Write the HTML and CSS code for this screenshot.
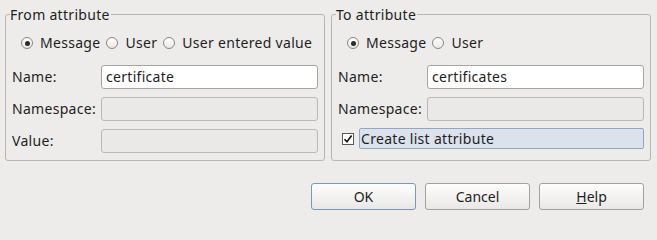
FILE: index.html
```html
<!DOCTYPE html>
<html>
<head>
<meta charset="utf-8">
<link rel="stylesheet" href="styles.css">
</head>
<body>
<div class="dialog">
  <div class="groups">
    <div class="group">
      <span class="group-title">From attribute</span>
      <div class="radios">
        <label class="radio"><span class="rb checked"></span>Message</label>
        <label class="radio"><span class="rb"></span>User</label>
        <label class="radio"><span class="rb"></span>User entered value</label>
      </div>
      <div class="form">
        <span class="lbl">Name:</span><div class="input">certificate</div>
        <span class="lbl">Namespace:</span><div class="input disabled"></div>
        <span class="lbl">Value:</span><div class="input disabled"></div>
      </div>
    </div>
    <div class="group">
      <span class="group-title">To attribute</span>
      <div class="radios">
        <label class="radio"><span class="rb checked"></span>Message</label>
        <label class="radio"><span class="rb"></span>User</label>
      </div>
      <div class="form">
        <span class="lbl">Name:</span><div class="input">certificates</div>
        <span class="lbl">Namespace:</span><div class="input disabled"></div>
      </div>
      <div class="check-row">
        <span class="cb"><svg width="10" height="10" viewBox="0 0 10 10"><path d="M1.5 5.2 L4 7.8 L8.6 1.6" fill="none" stroke="#111" stroke-width="1.6"/></svg></span>
        <span class="check-label">Create list attribute</span>
      </div>
    </div>
  </div>
  <div class="buttons">
    <button class="btn default">OK</button>
    <button class="btn">Cancel</button>
    <button class="btn"><u>H</u>elp</button>
  </div>
</div>
</body>
</html>
```
FILE: styles.css
```css
html, body {
  margin: 0;
  padding: 0;
  background: #edecea;
}
body {
  font-family: "Noto Sans", "DejaVu Sans", sans-serif;
  font-size: 14px;
  letter-spacing: 0.3px;
  color: #1e1e1e;
  width: 657px;
  height: 226px;
  overflow: hidden;
}
.dialog {
  padding: 14px 0 0 5px;
}
.groups {
  display: flex;
  gap: 6px;
}
.group {
  position: relative;
  box-sizing: border-box;
  width: 320px;
  height: 147px;
  border: 1px solid #b9b4af;
  border-radius: 3px;
  padding: 18px 6px 0 6px;
}
.group-title {
  position: absolute;
  top: -10px;
  left: 4px;
  line-height: 19px;
  padding: 0 1px 0 0;
  background: #edecea;
}
.radios {
  display: flex;
  height: 20px;
  align-items: center;
  padding-left: 9px;
  gap: 6px;
}
.radio {
  display: flex;
  align-items: center;
  gap: 7px;
  line-height: 20px;
}
.rb {
  width: 10px;
  height: 10px;
  border-radius: 50%;
  border: 1px solid #8a8682;
  background: linear-gradient(#ffffff, #e9e8e6);
  position: relative;
}
.rb.checked::after {
  content: "";
  position: absolute;
  left: 2.5px;
  top: 2.5px;
  width: 5px;
  height: 5px;
  border-radius: 50%;
  background: #2a2a2a;
}
.form {
  display: grid;
  grid-template-columns: 89px 217px;
  row-gap: 8px;
  margin-top: 12px;
  align-items: center;
}
.lbl {
  line-height: 24px;
}
.input {
  height: 24px;
  box-sizing: border-box;
  border: 1px solid #a9a49f;
  border-radius: 3px;
  background: #fff;
  padding: 0 4px;
  line-height: 22px;
}
.input.disabled {
  background: #eae9e7;
  border-color: #bdb8b3;
}
.check-row {
  display: flex;
  align-items: center;
  margin-top: 7px;
  padding-left: 4px;
  gap: 5px;
}
.cb {
  width: 12px;
  height: 12px;
  box-sizing: border-box;
  border: 1px solid #5c5955;
  background: #fff;
  display: flex;
  align-items: center;
  justify-content: center;
}
.check-label {
  flex: 1;
  height: 21px;
  box-sizing: border-box;
  border: 1px solid #8ea8c9;
  border-radius: 2px;
  background: #dbe2eb;
  padding: 0 1px;
  line-height: 19px;
}
.buttons {
  display: flex;
  justify-content: flex-end;
  gap: 9px;
  margin-top: 22px;
  padding-right: 13px;
}
.btn {
  width: 105px;
  height: 27px;
  font: inherit;
  color: inherit;
  border: 1px solid #a5a09b;
  border-radius: 3px;
  background: linear-gradient(#fdfdfd, #e9e8e6);
  padding: 0;
}
.btn.default {
  border-color: #7b97c0;
}
```
